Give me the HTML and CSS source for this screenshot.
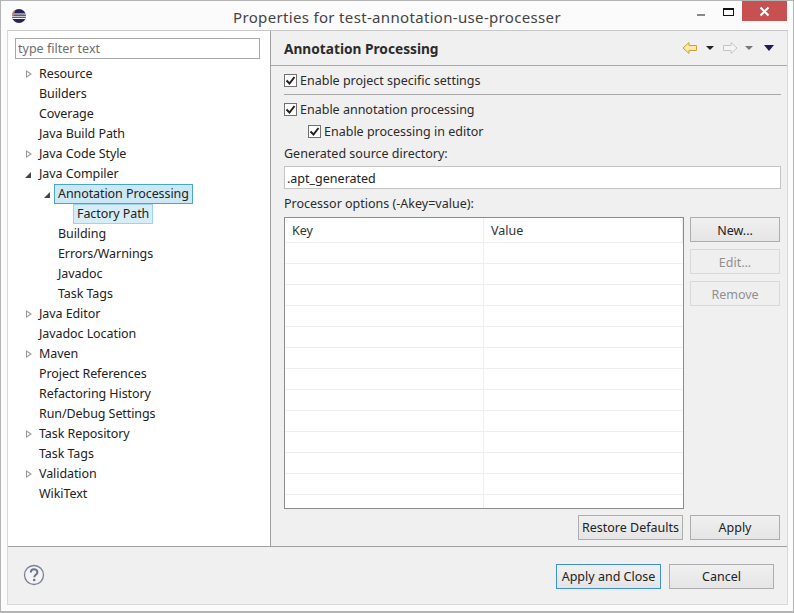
FILE: index.html
```html
<!DOCTYPE html>
<html lang="en">
<head>
  <meta charset="UTF-8" />
  <meta name="viewport" content="width=device-width, initial-scale=1.0" />
  <title>Properties for test-annotation-use-processer</title>
  <link rel="stylesheet" href="styles.css">
</head>
<body>

  <div class="window">
    <div class="titlebar">
      <svg class="app-icon" width="16" height="16" viewBox="0 0 16 16">
        <circle cx="8" cy="8" r="7" fill="#2c2255"/>
        <path d="M1.200 6h13.600M1 8.200h14M1.400 10.400h13.200" stroke="#fff" stroke-width="1.100"/>
        <path d="M3 2.500A7 7 0 0 0 1 8h1.500A6 6 0 0 1 4 3.500z" fill="#c98a5a"/>
      </svg>
      <div class="title">Properties for test-annotation-use-processer</div>
      <div class="win-controls">
        <span class="win-min"></span>
        <span class="win-max"></span>
        <span class="win-close">
          <svg width="11" height="11" viewBox="0 0 11 11"><path d="M1.500 1.500l8 8M9.500 1.500l-8 8" stroke="#fff" stroke-width="2"/></svg>
        </span>
      </div>
    </div>

    <div class="dialog">
      <div class="main">
        <div class="sidebar">
          <input class="filter" type="text" placeholder="type filter text" />
          <ul class="tree">
            <li class="row"><i class="arrow closed"></i><span>Resource</span></li>
            <li class="row"><i class="arrow"></i><span>Builders</span></li>
            <li class="row"><i class="arrow"></i><span>Coverage</span></li>
            <li class="row"><i class="arrow"></i><span>Java Build Path</span></li>
            <li class="row"><i class="arrow closed"></i><span>Java Code Style</span></li>
            <li class="row"><i class="arrow open"></i><span>Java Compiler</span></li>
            <li class="row lvl1"><i class="arrow open"></i><span class="selected">Annotation Processing</span></li>
            <li class="row lvl2"><i class="arrow"></i><span class="selected light">Factory Path</span></li>
            <li class="row lvl1"><i class="arrow"></i><span>Building</span></li>
            <li class="row lvl1"><i class="arrow"></i><span>Errors/Warnings</span></li>
            <li class="row lvl1"><i class="arrow"></i><span>Javadoc</span></li>
            <li class="row lvl1"><i class="arrow"></i><span>Task Tags</span></li>
            <li class="row"><i class="arrow closed"></i><span>Java Editor</span></li>
            <li class="row"><i class="arrow"></i><span>Javadoc Location</span></li>
            <li class="row"><i class="arrow closed"></i><span>Maven</span></li>
            <li class="row"><i class="arrow"></i><span>Project References</span></li>
            <li class="row"><i class="arrow"></i><span>Refactoring History</span></li>
            <li class="row"><i class="arrow"></i><span>Run/Debug Settings</span></li>
            <li class="row"><i class="arrow closed"></i><span>Task Repository</span></li>
            <li class="row"><i class="arrow"></i><span>Task Tags</span></li>
            <li class="row"><i class="arrow closed"></i><span>Validation</span></li>
            <li class="row"><i class="arrow"></i><span>WikiText</span></li>
          </ul>
        </div>

        <div class="content">
          <div class="content-head">
            <h2>Annotation Processing</h2>
            <div class="nav-icons">
              <svg width="16" height="14" viewBox="0 0 16 14"><path d="M1 7l6-5.500V4.500h7.500v5H7v3z" fill="#fde9a0" stroke="#c9a040"/></svg>
              <i class="caret dark"></i>
              <svg width="16" height="14" viewBox="0 0 16 14"><path d="M15 7L9 1.500V4.500H1.500v5H9v3z" fill="#f4f4f4" stroke="#c4c4c4"/></svg>
              <i class="caret grey"></i>
              <i class="caret navy"></i>
            </div>
          </div>

          <div class="body">
            <label class="check"><span class="box"><svg width="11" height="11" viewBox="0 0 11 11"><path d="M1.500 5.500l3 3 5-6.500" fill="none" stroke="#222" stroke-width="2"/></svg></span>Enable project specific settings</label>
            <hr class="sep" />
            <label class="check"><span class="box"><svg width="11" height="11" viewBox="0 0 11 11"><path d="M1.500 5.500l3 3 5-6.500" fill="none" stroke="#222" stroke-width="2"/></svg></span>Enable annotation processing</label>
            <label class="check nested"><span class="box"><svg width="11" height="11" viewBox="0 0 11 11"><path d="M1.500 5.500l3 3 5-6.500" fill="none" stroke="#222" stroke-width="2"/></svg></span>Enable processing in editor</label>
            <div class="label">Generated source directory:</div>
            <input class="dir" type="text" value=".apt_generated" />
            <div class="label options">Processor options (-Akey=value):</div>

            <div class="options-row">
              <div class="table">
                <div class="thead"><div>Key</div><div>Value</div></div>
                <div class="trow"><div></div><div></div></div>
                <div class="trow"><div></div><div></div></div>
                <div class="trow"><div></div><div></div></div>
                <div class="trow"><div></div><div></div></div>
                <div class="trow"><div></div><div></div></div>
                <div class="trow"><div></div><div></div></div>
                <div class="trow"><div></div><div></div></div>
                <div class="trow"><div></div><div></div></div>
                <div class="trow"><div></div><div></div></div>
                <div class="trow"><div></div><div></div></div>
                <div class="trow"><div></div><div></div></div>
                <div class="trow"><div></div><div></div></div>
                <div class="trow last"><div></div><div></div></div>
              </div>
              <div class="side-buttons">
                <button class="btn wide">New...</button>
                <button class="btn wide" disabled>Edit...</button>
                <button class="btn wide" disabled>Remove</button>
              </div>
            </div>

            <div class="apply-row">
              <button class="btn restore">Restore Defaults</button>
              <button class="btn wide">Apply</button>
            </div>
          </div>
        </div>
      </div>

      <div class="footer">
        <svg width="22" height="22" viewBox="0 0 22 22">
          <circle cx="11" cy="11" r="9.500" fill="#f4f4f6" stroke="#7a8199" stroke-width="1.300"/>
          <path d="M7.800 8.500c0-4.300 6.600-4.200 6.600-.2 0 2.400-3.200 2.400-3.200 5" fill="none" stroke="#6c7288" stroke-width="2"/>
          <circle cx="11.200" cy="16" r="1.300" fill="#6c7288"/>
        </svg>
        <div class="footer-buttons">
          <button class="btn big default">Apply and Close</button>
          <button class="btn big">Cancel</button>
        </div>
      </div>
    </div>
  </div>

</body>
</html>
```

FILE: styles.css
```css
* {
  box-sizing: border-box;
}
body {
  margin: 0;
  font-family: "Noto Sans", sans-serif;
  font-size: 12.5px;
  color: #222;
  background: #fbfbfb;
}
.window {
  width: 794px;
  height: 613px;
  display: flex;
  flex-direction: column;
  border: 1px solid #b4b4b4;
  border-bottom-width: 2px;
  background: #fbfbfb;
}

/* title bar */
.titlebar {
  height: 29px;
  flex: none;
  display: flex;
  align-items: center;
  position: relative;
  padding-left: 10px;
}
.title {
  flex: 1;
  text-align: center;
  font-size: 15px;
  letter-spacing: 0.33px;
  color: #444;
  margin-left: -26px;
  padding-top: 2px;
}
.win-controls {
  position: absolute;
  top: 0;
  right: 6px;
  display: flex;
  align-items: flex-start;
}
.win-min {
  width: 8px;
  height: 2px;
  background: #888;
  margin: 13px 18px 0 0;
}
.win-max {
  width: 11px;
  height: 8px;
  border: 1px solid #111;
  border-top-width: 2px;
  margin: 7px 8px 0 0;
}
.win-close {
  width: 45px;
  height: 20px;
  background: #c75050;
  display: flex;
  align-items: center;
  justify-content: center;
}

/* dialog */
.dialog {
  flex: 1;
  margin: 0 5px 6px 6px;
  border: 1px solid #d9d9d9;
  border-top-color: #c8c8c8;
  background: #f0f0f0;
  display: flex;
  flex-direction: column;
}
.main {
  height: 516px;
  flex: none;
  display: flex;
  border-bottom: 1px solid #a0a0a0;
}
.sidebar {
  width: 263px;
  flex: none;
  background: #fff;
  border-right: 1px solid #a0a0a0;
  padding: 7px 10px 0 7px;
}
.filter {
  display: block;
  width: 245px;
  height: 21px;
  border: 1px solid #a8a8a8;
  padding: 0 2px;
  font: inherit;
  color: #222;
  outline: none;
}
.filter::placeholder {
  color: #6d6d6d;
  opacity: 1;
}
.tree {
  list-style: none;
  margin: 5px 0 0;
  padding: 0;
  letter-spacing: -0.08px;
}
.row {
  height: 20px;
  display: flex;
  align-items: center;
  padding-left: 9px;
  white-space: nowrap;
}
.lvl1 {
  padding-left: 28px;
}
.lvl2 {
  padding-left: 47px;
}
.arrow {
  width: 9px;
  height: 9px;
  flex: none;
  margin-right: 5px;
  position: relative;
}
.arrow.closed::before {
  content: "";
  position: absolute;
  left: 2px;
  top: 0;
  border-left: 6px solid #9a9a9a;
  border-top: 4.500px solid transparent;
  border-bottom: 4.500px solid transparent;
}
.arrow.closed::after {
  content: "";
  position: absolute;
  left: 3px;
  top: 2px;
  border-left: 3px solid #fff;
  border-top: 2.500px solid transparent;
  border-bottom: 2.500px solid transparent;
}
.arrow.open::before {
  content: "";
  position: absolute;
  left: 1px;
  top: 2px;
  border-bottom: 6px solid #444;
  border-left: 6px solid transparent;
}
.row span {
  padding: 0 3px;
  margin-left: -3px;
  line-height: 18px;
  border: 1px solid transparent;
}
.row span.selected {
  background: #cde8f5;
  border-color: #48a6cc;
}
.row span.light {
  border-color: #9fd3ea;
  background: #d6edf8;
}

/* right side */
.content {
  flex: 1;
  display: flex;
  flex-direction: column;
  min-width: 0;
}
.content-head {
  height: 35px;
  flex: none;
  border-bottom: 1px solid #a8a8a8;
  display: flex;
  align-items: center;
  padding: 0 13px 0 13px;
}
h2 {
  flex: 1;
  margin: 0;
  font-size: 13.700px;
  font-weight: 700;
  color: #2b2b2b;
}
.nav-icons {
  display: flex;
  align-items: center;
}
.caret {
  width: 0;
  height: 0;
  border-left: 4px solid transparent;
  border-right: 4px solid transparent;
  border-top: 4px solid #222;
}
.caret.dark {
  margin: 0 8px;
}
.caret.grey {
  border-top-color: #777;
  margin: 0 11px 0 7px;
}
.caret.navy {
  border-left-width: 5px;
  border-right-width: 5px;
  border-top: 6px solid #1c1c50;
}
.body {
  padding: 4px 6px 0 13px;
  flex: 1;
}
.check {
  display: flex;
  align-items: center;
  height: 20px;
  color: #2b2b2b;
}
.box {
  width: 13px;
  height: 13px;
  flex: none;
  margin-right: 3px;
  border: 1px solid #707070;
  background: #fff;
  display: flex;
  align-items: center;
  justify-content: center;
}
.nested {
  padding-left: 24px;
  margin-top: 2px;
}
.sep {
  border: none;
  border-top: 1px solid #a8a8a8;
  margin: 4px 0;
}
.label {
  height: 20px;
  margin-top: 2px;
  line-height: 22px;
  color: #2b2b2b;
}
.label.options {
  margin-top: 4px;
}
.dir {
  display: block;
  width: 497px;
  height: 23px;
  margin-top: 3px;
  border: 1px solid #c4c4c4;
  padding: 2px 2px 0;
  font: inherit;
  color: #222;
  outline: none;
}
.options-row {
  display: flex;
  gap: 6px;
  margin-top: 4px;
}
.table {
  width: 400px;
  height: 292px;
  border: 1px solid #8c8c8c;
  background: #fff;
  overflow: hidden;
}
.thead,
.trow {
  display: grid;
  grid-template-columns: 199px 1fr;
}
.thead {
  height: 25px;
  line-height: 26px;
  border-bottom: 1px solid #eee;
}
.thead div {
  padding-left: 7px;
  border-right: 1px solid #eee;
  color: #333;
}
.trow {
  height: 21px;
  border-bottom: 1px solid #eee;
}
.trow.last {
  border-bottom: none;
}
.trow div:first-child {
  border-right: 1px solid #eee;
}
.side-buttons {
  display: flex;
  flex-direction: column;
  gap: 7px;
}
.side-buttons .btn {
  padding-top: 2px;
}
.btn {
  font: inherit;
  height: 25px;
  padding: 0;
  border: 1px solid #adadad;
  background: linear-gradient(#f0f0f0, #e5e5e5);
  color: #222;
}
.btn:disabled {
  border-color: #d9d9d9;
  background: #efefef;
  color: #8f8f8f;
}
.btn.wide {
  width: 90px;
}
.btn.restore {
  width: 105px;
}
.apply-row {
  display: flex;
  justify-content: flex-end;
  gap: 7px;
  margin-top: 6px;
  padding-right: 1px;
}
.footer {
  flex: 1;
  display: flex;
  align-items: flex-start;
  justify-content: space-between;
  padding: 17px 13px 0 15px;
}
.footer-buttons {
  display: flex;
  gap: 8px;
}
.btn.big {
  width: 105px;
}
.btn.default {
  border-color: #3f8fd6;
}
```
